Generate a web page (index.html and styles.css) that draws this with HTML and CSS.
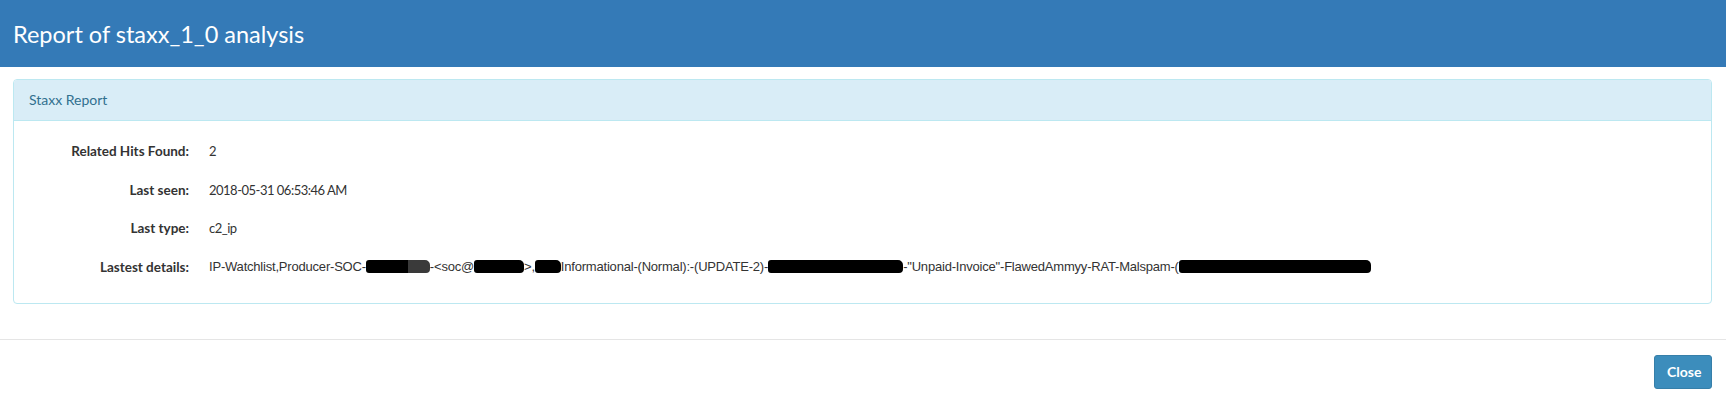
FILE: index.html
```html
<!DOCTYPE html>
<html lang="en">
<head>
<meta charset="utf-8">
<title>Report of staxx_1_0 analysis</title>
<link rel="stylesheet" href="styles.css">
</head>
<body>
<div class="modal">
  <div class="modal-header">
    <h3 class="modal-title">Report of staxx_1_0 analysis</h3>
  </div>
  <div class="modal-body">
    <div class="panel">
      <div class="panel-heading">Staxx Report</div>
      <div class="panel-body">
        <dl class="details">
          <dt>Related Hits Found:</dt>
          <dd>2</dd>
          <dt>Last seen:</dt>
          <dd>2018-05-31 06:53:46 AM</dd>
          <dt>Last type:</dt>
          <dd>c2_ip</dd>
          <dt>Lastest details:</dt>
          <dd class="long">IP-Watchlist,Producer-SOC-<span class="redact r1"></span>-&lt;soc@<span class="redact r2"></span>&gt;,<span class="redact r3"></span>Informational-(Normal):-(UPDATE-2)-<span class="redact r4"></span>-"Unpaid-Invoice"-FlawedAmmyy-RAT-Malspam-(<span class="redact r5"></span></dd>
        </dl>
      </div>
    </div>
  </div>
  <div class="modal-footer">
    <button class="btn" type="button">Close</button>
  </div>
</div>
</body>
</html>
```

FILE: styles.css
```css
html, body {
  margin: 0;
  padding: 0;
  background: #fff;
}
body {
  font-family: Lato, "Open Sans", sans-serif;
  font-size: 14px;
  color: #333;
}
.modal {
  display: flex;
  flex-direction: column;
}
.modal-header {
  background: #347ab7;
  height: 67px;
  display: flex;
  align-items: center;
  padding: 0 13px;
  box-sizing: border-box;
}
.modal-title {
  margin: 0;
  color: #fff;
  font-size: 23.5px;
  font-weight: 400;
  line-height: 28px;
}
.modal-body {
  padding: 12px 14px 15px 13px;
}
.panel {
  border: 1px solid #bce8f1;
  border-radius: 4px;
  margin-bottom: 20px;
}
.panel-heading {
  background: #d9edf7;
  color: #31708f;
  border-bottom: 1px solid #bce8f1;
  border-radius: 3px 3px 0 0;
  padding: 10px 15px;
  line-height: 20px;
  font-size: 14px;
}
.panel-body {
  padding: 20px 15px 26px;
}
.details {
  margin: 0;
  display: grid;
  grid-template-columns: 160px 1fr;
  column-gap: 20px;
  row-gap: 18.5px;
  line-height: 20px;
}
.details dt {
  font-weight: 700;
  text-align: right;
  font-size: 13.5px;
}
.details dd {
  margin: 0;
  font-size: 13px;
  letter-spacing: -0.5px;
}
.details .long {
  white-space: nowrap;
  font-family: "Liberation Sans", Arial, sans-serif;
  font-size: 13px;
  letter-spacing: -0.2px;
}
.redact {
  display: inline-block;
  height: 13px;
  background: #000;
  border-radius: 3px 5px 4px 3px;
  vertical-align: -2px;
}
.r1 {
  width: 64px;
  background: linear-gradient(90deg, #000 0, #000 42px, #3a3a3a 42px, #3a3a3a 100%);
}
.r2 { width: 50px; }
.r3 { width: 26px; }
.r4 { width: 135px; }
.r5 { width: 192px; }
.modal-footer {
  border-top: 1px solid #e5e5e5;
  padding: 15px 14px;
  display: flex;
  justify-content: flex-end;
}
.btn {
  font-family: Lato, "Open Sans", sans-serif;
  font-size: 14px;
  font-weight: 700;
  line-height: 20px;
  color: #fff;
  background: #3c8dbc;
  border: 1px solid #367fa9;
  border-radius: 3px;
  padding: 6px 12px;
  width: 58px;
}
```
